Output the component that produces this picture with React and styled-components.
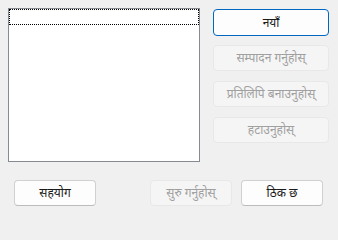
import React from "react";
import styled, { createGlobalStyle } from "styled-components";

const GlobalStyle = createGlobalStyle`
  html, body {
    margin: 0;
    padding: 0;
    background: #f0f0f0;
  }
  * {
    box-sizing: border-box;
  }
`;

const Dialog = styled.div`
  width: 338px;
  height: 222px;
  background: #f0f0f0;
  font-family: "Segoe UI", "Noto Sans", "Noto Sans Devanagari", sans-serif;
  font-size: 12px;
  display: flex;
  flex-direction: column;
`;

const TopRow = styled.div`
  display: flex;
  padding: 8px 9px 0 8px;
`;

const ListBox = styled.div`
  width: 192px;
  height: 154px;
  background: #fff;
  border: 1px solid #868a91;
`;

const FocusRow = styled.div`
  height: 16px;
  border: 1px dotted #000;
`;

const SideColumn = styled.div`
  display: flex;
  flex-direction: column;
  gap: 10px;
  width: 116px;
  margin: 1px 0 0 13px;
`;

const Button = styled.button`
  height: 26px;
  width: ${(p) => (p.$wide ? "116px" : "82px")};
  padding: 0 4px;
  font: inherit;
  font-weight: 400;
  line-height: 1;
  border-radius: 4px;
  white-space: nowrap;
  background: ${(p) => (p.disabled ? "#f5f5f5" : "#fdfdfd")};
  color: ${(p) => (p.disabled ? "#a0a0a0" : "#1a1a1a")};
  border: 1px solid ${(p) => (p.disabled ? "#e8e8e8" : "#d0d0d0")};
  ${(p) => p.$default && "border-color: #0067c0; height: 27px; margin-bottom: -1px;"}
  ${(p) => !p.disabled && !p.$default && "border-bottom-color: #bcbcbc;"}
  display: flex;
  align-items: center;
  justify-content: center;
`;

const BottomRow = styled.div`
  display: flex;
  justify-content: space-between;
  align-items: center;
  margin-top: 18px;
  padding: 0 15px 0 14px;
`;

const ButtonGroup = styled.div`
  display: flex;
  gap: 9px;
`;

const App = () => {
  return (
    <>
      <GlobalStyle />
      <Dialog>
        <TopRow>
          <ListBox>
            <FocusRow />
          </ListBox>
          <SideColumn>
            <Button $wide $default>नयाँ</Button>
            <Button $wide disabled>सम्पादन गर्नुहोस्</Button>
            <Button $wide disabled>प्रतिलिपि बनाउनुहोस्</Button>
            <Button $wide disabled>हटाउनुहोस्</Button>
          </SideColumn>
        </TopRow>
        <BottomRow>
          <Button>सहयोग</Button>
          <ButtonGroup>
            <Button disabled>सुरु गर्नुहोस्</Button>
            <Button>ठिक छ</Button>
          </ButtonGroup>
        </BottomRow>
      </Dialog>
    </>
  );
};

export default App;
